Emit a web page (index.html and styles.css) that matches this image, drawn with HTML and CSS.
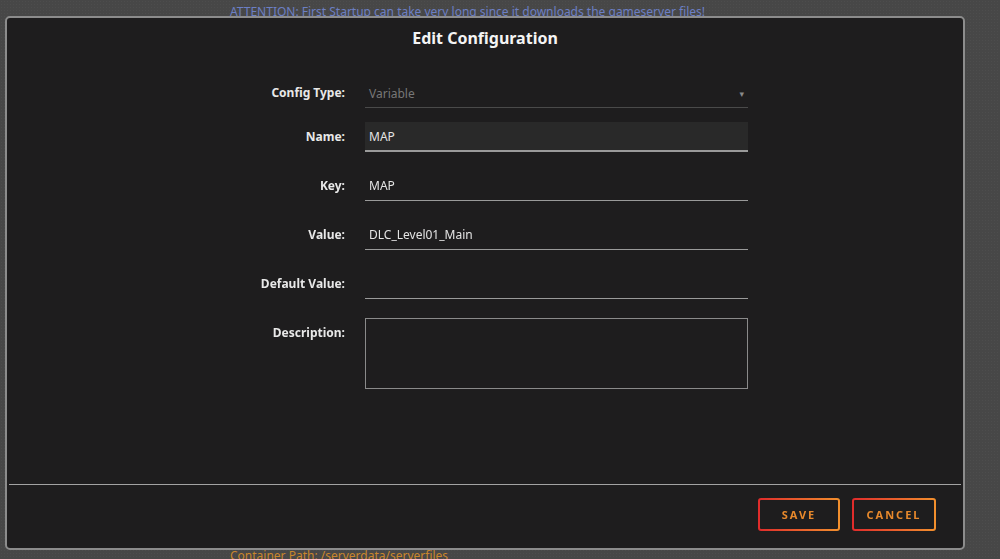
FILE: index.html
```html
<!DOCTYPE html>
<html lang="en">
<head>
  <meta charset="UTF-8" />
  <meta name="viewport" content="width=device-width, initial-scale=1.0"/>
  <title>Edit Configuration</title>
  <link rel="stylesheet" href="styles.css">
</head>
<body>

<!-- page behind the dialog -->
<main class="page">
  <a class="notice" href="#">ATTENTION: First Startup can take very long since it downloads the gameserver files!</a>
  <div class="path">Container Path: /serverdata/serverfiles</div>
</main>

<!-- dialog -->
<div class="modal">
  <h2 class="modal-title">Edit Configuration</h2>

  <form class="config-form">
    <div class="row row-type">
      <label for="c_type">Config Type:</label>
      <div class="select">
        <span id="c_type">Variable</span>
        <span class="caret">&#9662;</span>
      </div>
    </div>

    <div class="row">
      <label for="c_name">Name:</label>
      <input type="text" id="c_name" class="field field-focus" value="MAP">
    </div>

    <div class="row">
      <label for="c_key">Key:</label>
      <input type="text" id="c_key" class="field" value="MAP">
    </div>

    <div class="row">
      <label for="c_value">Value:</label>
      <input type="text" id="c_value" class="field" value="DLC_Level01_Main">
    </div>

    <div class="row">
      <label for="c_default">Default Value:</label>
      <input type="text" id="c_default" class="field" value="">
    </div>

    <div class="row">
      <label for="c_desc">Description:</label>
      <textarea id="c_desc" class="area"></textarea>
    </div>
  </form>

  <div class="modal-footer">
    <button type="button" class="btn">Save</button>
    <button type="button" class="btn">Cancel</button>
  </div>
</div>

</body>
</html>
```

FILE: styles.css
```css
body {
  margin: 0;
  height: 559px;
  overflow: hidden;
  font-family: 'Noto Sans', 'DejaVu Sans', sans-serif;
  background-color: #474747;
  background-image: radial-gradient(#4d4d4d 1px, transparent 1px);
  background-size: 3px 3px;
}
.page {
  height: 559px;
  box-sizing: border-box;
  padding: 4px 0 0 230px;
  display: flex;
  flex-direction: column;
  justify-content: space-between;
  font-size: 12px;
}
.notice {
  color: #6c7fc4;
  line-height: 16px;
}
.path {
  color: #c9862c;
  line-height: 16px;
  margin-bottom: -5px;
}

.modal {
  position: fixed;
  left: 5px;
  top: 16px;
  width: 960px;
  height: 534px;
  box-sizing: border-box;
  background: #1e1d1e;
  border: 2px solid #8c8c8c;
  border-radius: 5px;
  display: flex;
  flex-direction: column;
  color: #e4e4e4;
}
.modal-title {
  margin: 0;
  padding-top: 8px;
  text-align: center;
  font-size: 16px;
  line-height: 24px;
  font-weight: bold;
  color: #f4f4f4;
}

.config-form {
  flex: 1;
  padding-top: 28px;
}
.row {
  display: grid;
  grid-template-columns: 338px 383px;
  column-gap: 20px;
  margin-bottom: 19px;
}
.row-type {
  margin-bottom: 14px;
}
.row label {
  text-align: right;
  font-size: 12px;
  font-weight: bold;
  line-height: 30px;
  color: #e8e8e8;
}
.select {
  height: 30px;
  box-sizing: border-box;
  border-bottom: 1px solid #4a4a4a;
  display: flex;
  justify-content: space-between;
  align-items: center;
  padding: 1px 4px 0 4px;
  font-size: 12px;
  color: #777;
}
.caret {
  font-size: 9px;
  color: #8a8a8a;
}
.field {
  height: 30px;
  box-sizing: border-box;
  margin: 0;
  padding: 0 4px;
  border: none;
  border-bottom: 1px solid #9a9a9a;
  background: transparent;
  font-family: inherit;
  font-size: 12px;
  color: #e4e4e4;
  outline: none;
}
.field-focus {
  background: #292929;
  border-bottom: 2px solid #9a9a9a;
}
.area {
  height: 71px;
  box-sizing: border-box;
  margin: 0;
  border: 1px solid #8a8a8a;
  background: transparent;
  resize: none;
  font-family: inherit;
  color: #e4e4e4;
}

.modal-footer {
  flex: none;
  margin: 0 2px;
  height: 64px;
  box-sizing: border-box;
  border-top: 1px solid #a3a3a3;
  display: flex;
  justify-content: flex-end;
  align-items: flex-start;
  gap: 12px;
  padding: 13px 25px 0 0;
}
.btn {
  width: 82px;
  height: 33px;
  border: 2px solid transparent;
  border-radius: 3px;
  background: linear-gradient(#1e1d1e, #1e1d1e) padding-box,
              linear-gradient(to right, #e02b2b, #f2902d) border-box;
  color: #e8892c;
  font-family: inherit;
  font-size: 11px;
  font-weight: bold;
  letter-spacing: 2px;
  text-transform: uppercase;
  cursor: pointer;
}
.btn + .btn {
  width: 84px;
}
```
